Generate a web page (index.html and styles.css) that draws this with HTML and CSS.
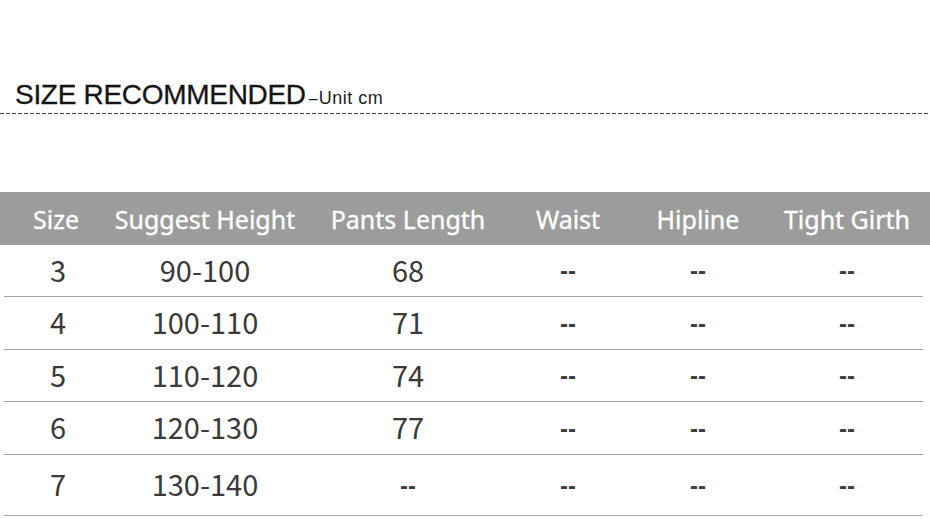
FILE: index.html
```html
<!DOCTYPE html>
<html>
<head>
<meta charset="utf-8">
<link rel="stylesheet" href="styles.css">
</head>
<body>
<div class="page">
  <div class="title">
    <span class="title-main">SIZE RECOMMENDED</span><span class="title-dash">–</span><span class="title-unit">Unit cm</span>
  </div>
  <div class="dash"></div>
  <div class="table">
    <div class="row head">
      <div>Size</div><div>Suggest Height</div><div>Pants Length</div><div>Waist</div><div>Hipline</div><div>Tight Girth</div>
    </div>
    <div class="row data r1">
      <div>3</div><div>90-100</div><div>68</div><div class="na">--</div><div class="na">--</div><div class="na">--</div>
    </div>
    <div class="row data r2">
      <div>4</div><div>100-110</div><div>71</div><div class="na">--</div><div class="na">--</div><div class="na">--</div>
    </div>
    <div class="row data r3">
      <div>5</div><div>110-120</div><div>74</div><div class="na">--</div><div class="na">--</div><div class="na">--</div>
    </div>
    <div class="row data r4">
      <div>6</div><div>120-130</div><div>77</div><div class="na">--</div><div class="na">--</div><div class="na">--</div>
    </div>
    <div class="row data last">
      <div>7</div><div>130-140</div><div class="na">--</div><div class="na">--</div><div class="na">--</div><div class="na">--</div>
    </div>
  </div>
</div>
</body>
</html>
```
FILE: styles.css
```css
html, body {
  margin: 0;
  padding: 0;
  background: #ffffff;
}
.page {
  width: 930px;
  height: 519px;
  overflow: hidden;
  padding-top: 79px;
  box-sizing: border-box;
}
.title {
  height: 32px;
  line-height: 32px;
  padding-left: 15px;
  white-space: nowrap;
  color: #151515;
  font-family: "Liberation Sans", Arial, sans-serif;
}
.title-main {
  font-size: 28px;
  letter-spacing: -0.3px;
  -webkit-text-stroke: 0.3px #151515;
}
.title-dash {
  font-size: 16px;
  margin-left: 3px;
  color: #222;
}
.title-unit {
  font-size: 18px;
  letter-spacing: 0.5px;
  color: #222;
  margin-left: 1px;
}
.dash {
  margin-top: 2px;
  height: 1px;
  background: repeating-linear-gradient(to right, #444 0 4px, transparent 4px 6px);
}
.table {
  margin-top: 78px;
}
.row {
  display: grid;
  grid-template-columns: 112px 186px 220px 100px 160px 138px;
  align-items: center;
  text-align: center;
}
.head {
  height: 53px;
  background: #9c9c9c;
  color: #ffffff;
  font-family: "Noto Sans", sans-serif;
  font-size: 25px;
  -webkit-text-stroke: 0.3px #ffffff;
}
.data {
  margin: 0 7px 0 4px;
  grid-template-columns: 108px 186px 220px 100px 160px 138px;
  border-bottom: 1px solid #a3a3a3;
  color: #3a3a3a;
  font-family: "Noto Sans CJK KR", "Noto Sans", sans-serif;
  font-size: 29px;
  padding-bottom: 4px;
  box-sizing: border-box;
}
.data.r1 { height: 52px; }
.data.r2 { height: 53px; }
.data.r3 { height: 52px; }
.data.r4 { height: 53px; }
.data.last { height: 61px; }
.na {
  font-family: "Liberation Sans", Arial, sans-serif;
  font-size: 24px;
  font-weight: bold;
  color: #3c3c3c;
  padding-top: 5px;
}
```
